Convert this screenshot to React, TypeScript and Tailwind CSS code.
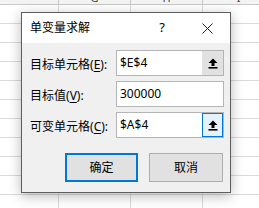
import React from 'react'

const FONT = { fontFamily: '"Noto Sans", "Noto Sans CJK SC", sans-serif' }

const columns = ['', 'G', 'H', 'I']

function SheetBackground() {
  const rows = Array.from({ length: 11 })
  return (
    <div className="w-full h-full bg-white">
      <div className="grid grid-cols-[59px_72px_72px_72px] h-[5px] bg-[#f3f3f3] border-b border-[#c8c8c8] overflow-hidden">
        {columns.map((c, i) => (
          <div key={i} className="border-r border-[#c8c8c8] h-[4px] overflow-hidden flex justify-center">
            <span className="block text-[11px] leading-[11px] -mt-[8px] text-[#444]">{c}</span>
          </div>
        ))}
      </div>
      {rows.map((_, r) => (
        <div key={r} className="grid grid-cols-[59px_72px_72px_72px] h-[19px] border-b border-[#dadada]">
          {columns.map((_, i) => (
            <div key={i} className="border-r border-[#dadada]" />
          ))}
        </div>
      ))}
    </div>
  )
}

function PickIcon() {
  return (
    <svg width="10" height="11" viewBox="0 0 10 11">
      <path d="M5 0.5 L9.5 5 L6.5 5 L6.5 8 L3.5 8 L3.5 5 L0.5 5 Z" fill="#000" />
      <rect x="0.5" y="9" width="9" height="1.6" fill="#000" />
    </svg>
  )
}

function RefInput({ value, active }: { value: string; active?: boolean }) {
  return (
    <div className="h-[26px] w-[108px] bg-white border border-[#b4b4b4] flex items-center">
      <span className="flex-1 pl-[3px] text-[12px] text-black">{value}</span>
      <div
        className={
          active
            ? 'h-[24px] w-[21px] bg-[#e5f1fb] border border-[#0078d7] flex items-center justify-center'
            : 'h-[24px] w-[21px] bg-[#e1e1e1] border border-[#e1e1e1] flex items-center justify-center'
        }
      >
        <PickIcon />
      </div>
    </div>
  )
}

function Label({ text, hotkey }: { text: string; hotkey: string }) {
  return (
    <span className="text-[12px] text-black whitespace-nowrap">
      {text}(<span className="underline underline-offset-2">{hotkey}</span>):
    </span>
  )
}

export default function App() {
  return (
    <div className="relative w-[259px] h-[208px] overflow-hidden" style={FONT}>
      <SheetBackground />

      <div className="absolute left-[21px] top-[12px] w-[210px] h-[181px] bg-[#f0f0f0] border border-[#5e5e5e] shadow-[0_3px_12px_rgba(0,0,0,0.28)] flex flex-col">
        <div className="h-[30px] bg-white flex items-center pl-[8px] shrink-0">
          <span className="text-[12px] text-black flex-1">单变量求解</span>
          <span className="text-[13px] text-black w-[14px] mr-[33px] text-center">?</span>
          <svg width="11" height="11" viewBox="0 0 11 11" className="mr-[17px]">
            <path d="M0.5 0.5 L10.5 10.5 M10.5 0.5 L0.5 10.5" stroke="#222" strokeWidth="1" />
          </svg>
        </div>

        <div className="flex flex-col gap-[5px] pt-[7px] pl-[8px]">
          <div className="flex items-center">
            <div className="w-[86px]">
              <Label text="目标单元格" hotkey="E" />
            </div>
            <RefInput value="$E$4" />
          </div>
          <div className="flex items-center">
            <div className="w-[86px]">
              <Label text="目标值" hotkey="V" />
            </div>
            <div className="h-[26px] w-[108px] bg-white border border-[#b4b4b4] flex items-center">
              <span className="pl-[3px] text-[12px] text-black">300000</span>
            </div>
          </div>
          <div className="flex items-center">
            <div className="w-[86px]">
              <Label text="可变单元格" hotkey="C" />
            </div>
            <RefInput value="$A$4" active />
          </div>
        </div>

        <div className="flex gap-[11px] pt-[15px] pl-[43px]">
          <button className="h-[29px] w-[73px] bg-[#e1e1e1] border-2 border-[#0078d7] text-[12px] text-black">
            确定
          </button>
          <button className="h-[29px] w-[74px] bg-[#e1e1e1] border border-[#adadad] text-[12px] text-black">
            取消
          </button>
        </div>
      </div>
    </div>
  )
}
